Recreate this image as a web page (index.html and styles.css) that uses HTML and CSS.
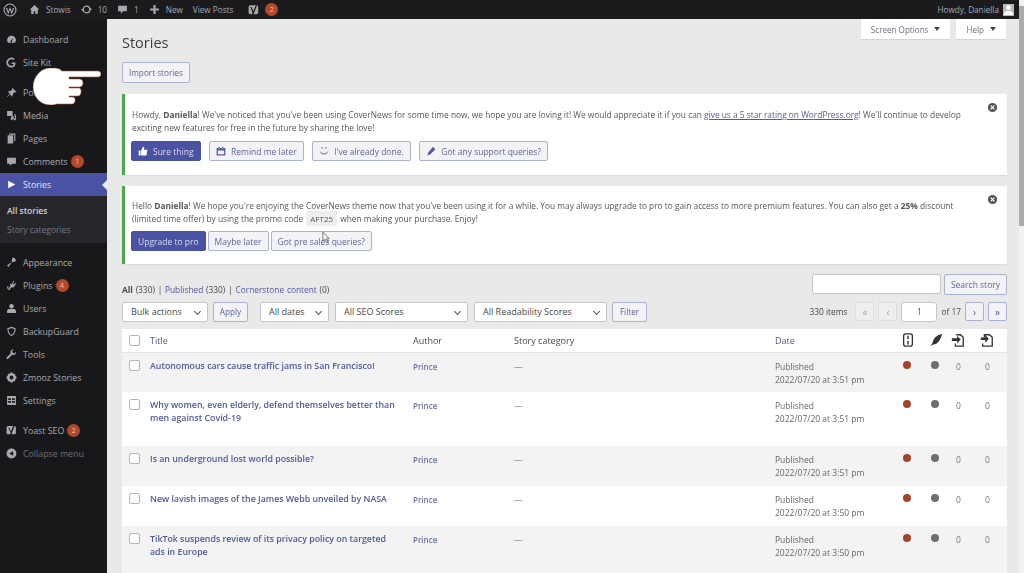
FILE: index.html
```html
<!DOCTYPE html>
<html lang="en">
<head>
    <meta charset="UTF-8">
    <title>Stories</title>
    <link rel="stylesheet" href="styles.css">
</head>
<body>
    <div class="admin-bar">
        <div class="bar-left">
            <svg class="bar-logo" viewBox="0 0 20 20"><circle cx="10" cy="10" r="8.5" fill="none" stroke="#a7aaad" stroke-width="1.6"/><path d="M4 7l3.6 9.5L10 9.500l2.500 7L16 7h-2l-1.500 5L10.500 6.500h-1L7.500 12 6 7z" fill="#a7aaad"/></svg>
            <span class="bar-item"><svg class="bar-icon" viewBox="0 0 20 20"><path d="M10 2L1.500 10H4v8h4.500v-5h3v5H16v-8h2.500z" fill="#a7aaad"/></svg>Stowis</span>
            <span class="bar-item"><svg class="bar-icon" viewBox="0 0 20 20"><circle cx="10" cy="10" r="6" fill="none" stroke="#a7aaad" stroke-width="2.400"/><path d="M0 9h6l-3 4zM14 11h6l-3-4z" fill="#a7aaad"/></svg>10</span>
            <span class="bar-item"><svg class="bar-icon" viewBox="0 0 20 20"><path d="M2 3h16v10h-7l-4 4.500V13H2z" fill="#a7aaad"/></svg>1</span>
            <span class="bar-item"><svg class="bar-icon" viewBox="0 0 20 20"><path d="M8 2h4v6h6v4h-6v6H8v-6H2V8h6z" fill="#a7aaad"/></svg>New</span>
            <span class="bar-item">View Posts</span>
            <span class="bar-item"><svg class="bar-icon yoast" viewBox="0 0 20 20"><rect x="1" y="2" width="16" height="15" rx="3" fill="#a7aaad"/><path d="M6 5l3 7 4-10 2 0-6 16H6l1.500-4L4 5z" fill="#1b1b1d"/></svg><span class="count">2</span></span>
        </div>
        <div class="bar-right">Howdy, Daniella<span class="avatar"><svg viewBox="0 0 12 12"><circle cx="6" cy="4" r="2.600" fill="#fff"/><path d="M1 12c0-3.500 2-4.500 5-4.500s5 1 5 4.500z" fill="#fff"/></svg></span></div>
    </div>

    <div class="layout">
        <nav class="side-menu">
            <a class="menu-item"><svg viewBox="0 0 20 20"><path d="M10 3a8 8 0 0 0-8 8c0 2 .7 3.700 2 5h12c1.300-1.300 2-3 2-5a8 8 0 0 0-8-8zm1 9.500a1.600 1.600 0 1 1-2-.5l4-5z" fill="#a7aaad"/></svg>Dashboard</a>
            <a class="menu-item"><svg viewBox="0 0 20 20"><path d="M17 10.200h-6.800v2.600h4c-.5 2-2.200 3.200-4.200 3.200a6 6 0 1 1 3.900-10.500l2-2A9 9 0 1 0 10 19c5 0 8-3.500 7-8.800z" fill="#a7aaad"/></svg>Site Kit</a>
            <a class="menu-item gap-top"><svg viewBox="0 0 20 20"><path d="M11 1l8 8-2 1-1-1-4 4c.5 2 0 3.500-1 4.500L7.500 13 2 18l-.5-.5L7 12 3.500 8.500C4.500 7.500 6 7 8 7.500l4-4-1-1z" fill="#a7aaad"/></svg>Posts</a>
            <a class="menu-item"><svg viewBox="0 0 20 20"><path d="M2 2h10v9H2zM9 12h3v-1h2v6h-2a2 2 0 1 1 0-2v-1H9z M15 8h3v9a2 2 0 1 1-2-2V10h-1z" fill="#a7aaad"/></svg>Media</a>
            <a class="menu-item"><svg viewBox="0 0 20 20"><path d="M6 1h11v14h-2V3H6zM3 4h10v15H3z" fill="#a7aaad"/></svg>Pages</a>
            <a class="menu-item"><svg viewBox="0 0 20 20"><path d="M2 3h16v11h-7l-4 4v-4H2z" fill="#a7aaad"/></svg>Comments<span class="count">1</span></a>
            <a class="menu-item current"><svg viewBox="0 0 20 20"><path d="M4 3l13 7-13 7z" fill="#fff"/></svg>Stories</a>
            <div class="submenu">
                <a class="sub-item active">All stories</a>
                <a class="sub-item">Story categories</a>
            </div>
            <a class="menu-item gap-top-lg"><svg viewBox="0 0 20 20"><path d="M12 1c3 0 6 2.500 6 6l-3 2-4-1-1.500 1.500c.5 2-3 6-5 8.500L2 15.500c2.500-2 6.500-5.500 8.500-5l1-1.500-1-4z" fill="#a7aaad"/></svg>Appearance</a>
            <a class="menu-item"><svg viewBox="0 0 20 20"><path d="M13 2l2 1-2.500 4 2 1L17 5l1 2-3 5c-1.500 2-4 2-5.500 1L6 18H3l5-7c-.8-1.500-.5-3 .5-4.500L11 8z M2 12h3l-2 4H2z" fill="#a7aaad"/></svg>Plugins<span class="count">4</span></a>
            <a class="menu-item"><svg viewBox="0 0 20 20"><circle cx="10" cy="6" r="4" fill="#a7aaad"/><path d="M2 18v-4c0-2 2-3 5-3h6c3 0 5 1 5 3v4z" fill="#a7aaad"/></svg>Users</a>
            <a class="menu-item"><svg viewBox="0 0 20 20"><path d="M10 2.500l6.500 2.500c0 6-2 10-6.500 12.500C5.500 15 3.500 11 3.500 5z" fill="none" stroke="#a7aaad" stroke-width="2"/></svg>BackupGuard</a>
            <a class="menu-item"><svg viewBox="0 0 20 20"><path d="M18 5l-3 3-3-1-1-3 3-3c-3-.5-6 1-6 5l.5 2-7 7c-1 1-.5 2 0 2.500s1.500 1 2.500 0l7-7 2 .5c4 0 5.500-3 5-6z" fill="#a7aaad"/></svg>Tools</a>
            <a class="menu-item"><svg viewBox="0 0 20 20"><path d="M8 1h4l.6 2.500 2-1 2.900 2.900-1 2L19 8v4l-2.500.6 1 2-2.900 2.900-2-1L12 19H8l-.6-2.500-2 1-2.900-2.900 1-2L1 12V8l2.500-.6-1-2L5.400 2.500l2 1zM10 6.500a3.500 3.500 0 1 0 0 7 3.500 3.500 0 0 0 0-7z" fill="#a7aaad"/></svg>Zmooz Stories</a>
            <a class="menu-item"><svg viewBox="0 0 20 20"><path d="M2 2h16v16H2zM4 6v3h5V6zm7 0v3h5V6zm-7 5v3h5v-3zm7 0v3h5v-3z" fill="#a7aaad" fill-rule="evenodd"/></svg>Settings</a>
            <a class="menu-item gap-top"><svg viewBox="0 0 20 20"><rect x="1" y="2" width="17" height="15" rx="3" fill="#a7aaad"/><path d="M6 5l3 7 4-10h2.500l-6 16H7l1.500-4L4 5z" fill="#18181a"/></svg>Yoast SEO<span class="count">2</span></a>
            <a class="menu-item collapse"><svg viewBox="0 0 20 20"><path d="M10 1a9 9 0 1 0 0 18 9 9 0 0 0 0-18zm3 5v8l-7-4z" fill="#a7aaad"/></svg>Collapse menu</a>
        </nav>

        <main class="content">
            <div class="screen-tabs">
                <span class="tab">Screen Options<i class="caret"></i></span>
                <span class="tab">Help<i class="caret"></i></span>
            </div>
            <h1 class="page-title">Stories</h1>
            <button class="btn import-btn">Import stories</button>

            <div class="notice">
                <svg class="dismiss" viewBox="0 0 12 12"><circle cx="6" cy="6" r="5" fill="#555"/><path d="M4 4l4 4M8 4l-4 4" stroke="#fff" stroke-width="1.300"/></svg>
                <p>Howdy, <b>Daniella</b>! We've noticed that you've been using CoverNews for some time now, we hope you are loving it! We would appreciate it if you can <a class="underline">give us a 5 star rating on WordPress.org</a>! We'll continue to develop exciting new features for free in the future by sharing the love!</p>
                <div class="notice-actions wide">
                    <button class="btn primary"><svg viewBox="0 0 16 16"><path d="M1 7h3v8H1zM5 7l3-6c1.500 0 2 1 2 2l-.5 3H15l-1.500 9H5z" fill="#fff"/></svg>Sure thing</button>
                    <button class="btn"><svg viewBox="0 0 16 16"><path d="M1 3h14v12H1zM3 7v6h10V7zM4 1h2v3H4zM10 1h2v3h-2z" fill="#4f5aa0" fill-rule="evenodd"/></svg>Remind me later</button>
                    <button class="btn"><svg viewBox="0 0 16 16"><path d="M4 2h2v2H4zM10 2h2v2h-2z" fill="#4f5aa0"/><path d="M2 9c2 5 10 5 12 0" fill="none" stroke="#4f5aa0" stroke-width="1.500"/></svg>I've already done.</button>
                    <button class="btn"><svg viewBox="0 0 16 16"><path d="M11 1l4 4-8 8-5 2 2-5z" fill="#4f5aa0"/></svg>Got any support queries?</button>
                </div>
            </div>

            <div class="notice">
                <svg class="dismiss" viewBox="0 0 12 12"><circle cx="6" cy="6" r="5" fill="#555"/><path d="M4 4l4 4M8 4l-4 4" stroke="#fff" stroke-width="1.300"/></svg>
                <p>Hello <b>Daniella</b>! We hope you're enjoying the CoverNews theme now that you've been using it for a while. You may always upgrade to pro to gain access to more premium features. You can also get a <b>25%</b> discount (limited time offer) by using the promo code <code class="promo">AFT25</code> when making your purchase. Enjoy!</p>
                <div class="notice-actions">
                    <button class="btn primary">Upgrade to pro</button>
                    <button class="btn">Maybe later</button>
                    <button class="btn">Got pre sales queries?</button>
                </div>
            </div>

            <div class="list-head">
                <div class="filters-links"><b>All</b> (330) | <a>Published</a> (330) | <a>Cornerstone content</a> (0)</div>
                <div class="search-box"><span class="field search-field"></span><button class="btn search-btn">Search story</button></div>
            </div>

            <div class="tablenav">
                <span class="select w-bulk">Bulk actions</span>
                <button class="btn small">Apply</button>
                <span class="select w-dates">All dates</span>
                <span class="select w-seo">All SEO Scores</span>
                <span class="select w-read">All Readability Scores</span>
                <button class="btn small">Filter</button>
                <div class="pager">
                    <span class="item-count">330 items</span>
                    <span class="page-btn off">«</span>
                    <span class="page-btn off">‹</span>
                    <span class="field page-input">1</span>
                    <span>of 17</span>
                    <span class="page-btn">›</span>
                    <span class="page-btn">»</span>
                </div>
            </div>

            <table class="stories">
                <colgroup>
                    <col class="c-check"><col class="c-title"><col class="c-author"><col class="c-cat"><col class="c-date"><col class="c-a"><col class="c-b"><col class="c-c"><col class="c-d">
                </colgroup>
                <thead>
                    <tr>
                        <th><span class="check"></span></th>
                        <th><a>Title</a></th>
                        <th>Author</th>
                        <th>Story category</th>
                        <th><a>Date</a></th>
                        <th><svg class="col-icon" viewBox="0 0 16 16"><rect x="3" y="1" width="10" height="14" rx="2.500" fill="none" stroke="#333" stroke-width="1.500"/><path d="M8 3v4M8 9v4" stroke="#333" stroke-width="1.600"/></svg></th>
                        <th><svg class="col-icon" viewBox="0 0 16 16"><path d="M15 1C9 2 5 6 4 11l-2 4 3-2c5 0 8-5 10-12z" fill="#333"/></svg></th>
                        <th><svg class="col-icon" viewBox="0 0 16 16"><path d="M6 2h5l3 3v10H5v-3" fill="none" stroke="#333" stroke-width="1.500"/><path d="M1 6h6V3l4 4.500L7 12V9H1z" fill="#333"/></svg></th>
                        <th><svg class="col-icon" viewBox="0 0 16 16"><path d="M5 5V2h6l3 3v10H3v-3" fill="none" stroke="#333" stroke-width="1.500"/><path d="M1 5h5V2l4 4.500L6 11V8H1z" fill="#333"/></svg></th>
                    </tr>
                </thead>
                <tbody>
                    <tr class="odd h40">
                        <td><span class="check"></span></td>
                        <td><a class="story-title">Autonomous cars cause traffic jams in San Francisco!</a></td>
                        <td><a class="author">Prince</a></td>
                        <td class="dash">—</td>
                        <td class="date">Published<br>2022/07/20 at 3:51 pm</td>
                        <td><i class="dot red"></i></td><td><i class="dot grey"></i></td><td class="num">0</td><td class="num">0</td>
                    </tr>
                    <tr class="h54">
                        <td><span class="check"></span></td>
                        <td><a class="story-title">Why women, even elderly, defend themselves better than men against Covid-19</a></td>
                        <td><a class="author">Prince</a></td>
                        <td class="dash">—</td>
                        <td class="date">Published<br>2022/07/20 at 3:51 pm</td>
                        <td><i class="dot red"></i></td><td><i class="dot grey"></i></td><td class="num">0</td><td class="num">0</td>
                    </tr>
                    <tr class="odd h40">
                        <td><span class="check"></span></td>
                        <td><a class="story-title">Is an underground lost world possible?</a></td>
                        <td><a class="author">Prince</a></td>
                        <td class="dash">—</td>
                        <td class="date">Published<br>2022/07/20 at 3:51 pm</td>
                        <td><i class="dot red"></i></td><td><i class="dot grey"></i></td><td class="num">0</td><td class="num">0</td>
                    </tr>
                    <tr class="h40">
                        <td><span class="check"></span></td>
                        <td><a class="story-title">New lavish images of the James Webb unveiled by NASA</a></td>
                        <td><a class="author">Prince</a></td>
                        <td class="dash">—</td>
                        <td class="date">Published<br>2022/07/20 at 3:50 pm</td>
                        <td><i class="dot red"></i></td><td><i class="dot grey"></i></td><td class="num">0</td><td class="num">0</td>
                    </tr>
                    <tr class="odd h54">
                        <td><span class="check"></span></td>
                        <td><a class="story-title">TikTok suspends review of its privacy policy on targeted ads in Europe</a></td>
                        <td><a class="author">Prince</a></td>
                        <td class="dash">—</td>
                        <td class="date">Published<br>2022/07/20 at 3:50 pm</td>
                        <td><i class="dot red"></i></td><td><i class="dot grey"></i></td><td class="num">0</td><td class="num">0</td>
                    </tr>
                </tbody>
            </table>
        </main>
    </div>

    <div class="scrollbar"><span class="thumb"></span></div>

    <svg class="hand" viewBox="0 0 68 37"><path d="M17 0h5c3 0 5 1 7 3h36c2 0 3 1.500 3 3s-1 3-3 3H36v2h10c3 0 4 2 4 4s-1 4-4 4H36v1h10c3 0 3 8-1 8h-9v1h4c3 0 3 7-1 7H24c-3 1-5 1-7 1C7 37 0 28 0 19S7 0 17 0z" fill="#fff" stroke="#a5573c" stroke-width=".6"/></svg>
    <svg class="pointer" viewBox="0 0 10 14"><path d="M1 1v10l2.500-2 2 4 1.500-.8-2-3.800H8z" fill="#fff" stroke="#444" stroke-width=".8"/></svg>
</body>
</html>
```

FILE: styles.css
```css
* {
    box-sizing: border-box;
}

html, body {
    height: 100%;
}

body {
    margin: 0;
    overflow: hidden;
    background-color: #e9e9e9;
    font-family: "Open Sans", sans-serif;
    font-size: 8.35px;
    color: #4a4a4a;
    filter: blur(0.4px);
}

a {
    color: #4f5aa0;
}

/* top bar */
.admin-bar {
    display: flex;
    justify-content: space-between;
    align-items: center;
    height: 19px;
    padding: 0 10px 0 3px;
    background-color: #1b1b1d;
    color: #a7aaad;
    font-size: 8.2px;
}

.bar-left {
    display: flex;
    align-items: center;
}

.bar-logo {
    width: 14px;
    height: 14px;
    margin-right: 12px;
}

.bar-item {
    display: flex;
    align-items: center;
    margin-right: 10px;
}

.bar-icon {
    width: 11px;
    height: 11px;
    margin-right: 6px;
}

.bar-icon.yoast {
    width: 12px;
    height: 12px;
    margin-right: 2px;
    margin-left: 5px;
}

.bar-right {
    display: flex;
    align-items: center;
}

.avatar {
    width: 11px;
    height: 12px;
    margin-left: 4px;
    background-color: #b9b9b9;
}

.avatar svg {
    display: block;
}

.count {
    display: inline-block;
    width: 13px;
    height: 13px;
    margin-left: 3px;
    border-radius: 50%;
    background-color: #b5482a;
    color: #e6c4b6;
    font-size: 7.5px;
    line-height: 13px;
    text-align: center;
}

.layout {
    display: flex;
    height: calc(100% - 19px);
}

/* left menu */
.side-menu {
    flex: none;
    width: 107px;
    padding-top: 9px;
    background-color: #18181a;
}

.menu-item {
    display: flex;
    align-items: center;
    height: 23px;
    padding-left: 6px;
    color: #a7aaad;
    font-size: 8.8px;
}

.menu-item svg {
    flex: none;
    width: 11px;
    height: 11px;
    margin-right: 6px;
}

.menu-item.gap-top {
    margin-top: 7px;
}

.menu-item.gap-top-lg {
    margin-top: 8px;
}

.menu-item.current {
    position: relative;
    background-color: #4a52a3;
    color: #e4e4f0;
}

.menu-item.current::after {
    content: "";
    position: absolute;
    right: 0;
    top: 7px;
    border: 5px solid transparent;
    border-right-color: #e9e9e9;
    border-left-width: 0;
}

.menu-item.collapse {
    color: #6d6f73;
}

.submenu {
    display: flex;
    flex-direction: column;
    height: 47px;
    padding-top: 5px;
    background-color: #25252a;
}

.sub-item {
    height: 19px;
    padding-left: 7px;
    color: #77797d;
    font-size: 8.5px;
    line-height: 19px;
}

.sub-item.active {
    color: #d5d5d7;
    font-weight: 600;
}

/* main area */
.content {
    position: relative;
    flex: 1;
    min-width: 0;
    padding: 0 17px 0 15px;
}

.screen-tabs {
    position: absolute;
    top: 0;
    right: 18px;
    display: flex;
    gap: 6px;
}

.tab {
    display: flex;
    align-items: center;
    height: 20px;
    padding: 0 10px;
    background-color: #fff;
    box-shadow: 0 1px 1px #d5d5d5;
    color: #6d7086;
    font-size: 8.1px;
}

.caret {
    margin-left: 6px;
    border: 3px solid transparent;
    border-top: 4px solid #444;
    border-bottom-width: 0;
}

.page-title {
    margin: 0;
    padding-top: 14px;
    height: 43px;
    font-size: 14.5px;
    font-weight: 400;
    line-height: 20px;
    color: #3c3c3c;
}

.btn {
    display: inline-flex;
    align-items: center;
    height: 21px;
    padding: 0 6px;
    border: 1px solid #a9b1d4;
    border-radius: 2px;
    background-color: #f3f3f6;
    color: #5d669f;
    font-family: inherit;
    font-size: 8.2px;
    white-space: nowrap;
}

.btn svg {
    width: 10px;
    height: 10px;
    margin-right: 5px;
}

.btn.primary {
    border-color: #4a52a3;
    background-color: #4a52a3;
    color: #d9dbef;
}

.import-btn {
    display: flex;
    margin-bottom: 11px;
}

.search-btn {
    font-size: 8.5px;
}

.notice {
    position: relative;
    height: 81px;
    margin-bottom: 11px;
    padding: 14px 8px 0 7px;
    border-left: 3px solid #4caa46;
    background-color: #fff;
    box-shadow: 0 1px 1px #dcdcdc;
}

.notice + .notice {
    height: 78px;
    margin-bottom: 0;
    padding-top: 13px;
}

.notice p {
    width: 845px;
    margin: 0;
    line-height: 13px;
    color: #55575c;
}

.notice a {
    color: #4f5aa0;
}

.notice .btn {
    height: 20px;
    font-size: 8.5px;
}

.underline {
    text-decoration: underline;
}

.dismiss {
    position: absolute;
    top: 8px;
    right: 9px;
    width: 11px;
    height: 11px;
}

.notice-actions {
    display: flex;
    gap: 2px;
    margin-top: 6px;
    margin-left: -1px;
}

.notice-actions.wide {
    gap: 8.5px;
    margin-top: 7px;
}

.promo {
    padding: 2px 4px;
    background-color: #eee;
    font-family: inherit;
    font-size: 8px;
    margin: 0 1px;
}

.list-head {
    display: flex;
    justify-content: space-between;
    align-items: flex-start;
    height: 21px;
    margin-top: 10px;
}

.filters-links {
    padding-top: 10px;
    word-spacing: 0.6px;
}

.search-box {
    display: flex;
    gap: 3px;
}

.field {
    display: block;
    height: 20px;
    border: 1px solid #c5c5c5;
    border-radius: 3px;
    background-color: #fff;
}

.search-field {
    width: 129px;
}

.tablenav {
    display: flex;
    align-items: center;
    gap: 5px;
    height: 21px;
    margin-top: 6px;
}

.select {
    display: flex;
    align-items: center;
    height: 20px;
    padding-left: 8px;
    border: 1px solid #c5c5c5;
    border-radius: 2px;
    background-color: #fff;
    color: #4a4a4a;
    font-size: 9px;
    position: relative;
}

.select::after {
    content: "";
    position: absolute;
    right: 7px;
    top: 6px;
    width: 4px;
    height: 4px;
    border-right: 1.5px solid #555;
    border-bottom: 1.5px solid #555;
    transform: rotate(45deg);
}

.w-bulk { width: 86px; }
.w-dates { width: 69px; margin-left: 7px; }
.w-seo { width: 133px; margin-left: 1px; }
.w-read { width: 133px; margin-left: 1px; }

.btn.small {
    width: 35px;
    height: 20px;
    padding: 0;
    justify-content: center;
}

.pager {
    display: flex;
    align-items: center;
    gap: 4px;
    margin-left: auto;
}

.item-count {
    margin-right: 4px;
}

.page-btn {
    display: flex;
    align-items: center;
    justify-content: center;
    width: 19px;
    height: 19px;
    border: 1px solid #a9b1d4;
    border-radius: 2px;
    background-color: #f3f3f6;
    color: #4f5aa0;
    font-size: 10px;
}

.page-btn.off {
    border-color: #ddd;
    background-color: #eee;
    color: #aaa;
}

.page-input {
    width: 36px;
    height: 20px;
    line-height: 18px;
    text-align: center;
}

/* stories table */
.stories {
    width: 885px;
    margin-top: 7px;
    border-collapse: collapse;
    table-layout: fixed;
    background-color: #fff;
}

.c-check { width: 28px; }
.c-title { width: 263px; }
.c-author { width: 101px; }
.c-cat { width: 261px; }
.c-date { width: 126px; }
.c-a { width: 28px; }
.c-b { width: 22px; }
.c-c { width: 29px; }
.c-d { width: 27px; }

.stories th {
    height: 23px;
    padding: 0;
    border-bottom: 1px solid #e2e2e2;
    font-weight: 400;
    font-size: 9px;
    text-align: left;
    color: #4a4a4a;
}

.stories td {
    padding: 7px 0 0;
    vertical-align: top;
    font-size: 8.5px;
    line-height: 13px;
}

.stories .odd {
    background-color: #f3f3f3;
}

.h40 { height: 40px; }
.h54 { height: 54px; }

.check {
    display: block;
    width: 11px;
    height: 11px;
    margin-left: 7px;
    border: 1px solid #b5b5b5;
    border-radius: 2px;
    background-color: #fff;
}

.story-title {
    display: block;
    padding-right: 10px;
    font-size: 8.8px;
    font-weight: 600;
    line-height: 13px;
}

.author {
    font-size: 8px;
    color: #6a73ad;
    font-weight: 600;
}

.dash {
    color: #888;
}

.date {
    color: #666;
}

.col-icon {
    display: block;
    width: 14px;
    height: 14px;
}

.dot {
    display: block;
    width: 8px;
    height: 8px;
    margin-top: 1px;
    margin-left: 2px;
    border-radius: 50%;
}

.dot.red { background-color: #a5402a; }
.dot.grey { background-color: #6f6f6f; }

.stories .num {
    padding-left: 5px;
    color: #777;
}

/* window scrollbar */
.scrollbar {
    position: absolute;
    top: 0;
    right: 0;
    width: 5px;
    height: 100%;
    background-color: #f1f1f1;
}

.thumb {
    display: block;
    width: 100%;
    height: 220px;
    margin-top: 6px;
    background-color: #ababab;
}

/* pointers from the recording */
.hand {
    position: absolute;
    left: 33px;
    top: 68px;
    width: 68px;
    height: 37px;
}

.pointer {
    position: absolute;
    left: 322px;
    top: 231px;
    width: 9px;
    height: 13px;
}
```
